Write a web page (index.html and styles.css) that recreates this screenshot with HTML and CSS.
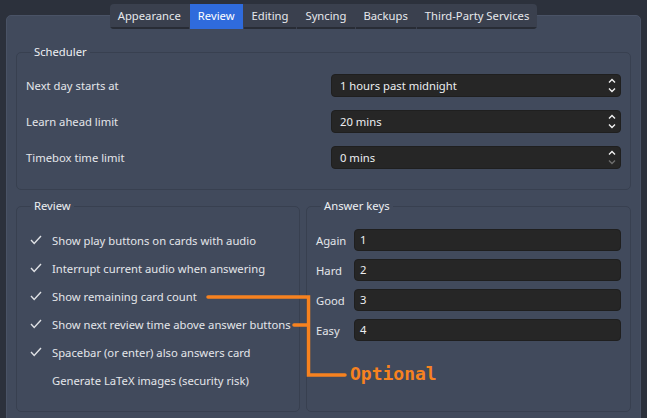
FILE: index.html
```html
<!DOCTYPE html>
<html lang="en">
<head>
<meta charset="utf-8">
<title>Preferences</title>
<link rel="stylesheet" href="styles.css">
</head>
<body>
<div class="window">
  <nav class="tabs">
    <div class="tab">Appearance</div>
    <div class="tab active">Review</div>
    <div class="tab">Editing</div>
    <div class="tab">Syncing</div>
    <div class="tab">Backups</div>
    <div class="tab">Third-Party Services</div>
  </nav>
  <main class="panel">
    <fieldset class="group scheduler">
      <legend>Scheduler</legend>
      <div class="form-grid">
        <label class="field-label">Next day starts at</label>
        <div class="spinbox"><span>1 hours past midnight</span>
          <svg class="spin" width="8" height="15" viewBox="0 0 8 15"><polyline points="1,4.5 4,1.5 7,4.5"/><polyline points="1,10.5 4,13.5 7,10.5"/></svg>
        </div>
        <label class="field-label">Learn ahead limit</label>
        <div class="spinbox"><span>20 mins</span>
          <svg class="spin" width="8" height="15" viewBox="0 0 8 15"><polyline points="1,4.5 4,1.5 7,4.5"/><polyline points="1,10.5 4,13.5 7,10.5"/></svg>
        </div>
        <label class="field-label">Timebox time limit</label>
        <div class="spinbox"><span>0 mins</span>
          <svg class="spin" width="8" height="15" viewBox="0 0 8 15"><polyline points="1,4.5 4,1.5 7,4.5"/><polyline class="disabled" points="1,10.5 4,13.5 7,10.5"/></svg>
        </div>
      </div>
    </fieldset>
    <div class="bottom-row">
      <fieldset class="group review">
        <legend>Review</legend>
        <ul class="checks">
          <li><svg class="check" width="12" height="10" viewBox="0 0 12 10"><polyline points="1,5 4.2,8.5 11,1"/></svg>Show play buttons on cards with audio</li>
          <li><svg class="check" width="12" height="10" viewBox="0 0 12 10"><polyline points="1,5 4.2,8.5 11,1"/></svg>Interrupt current audio when answering</li>
          <li><svg class="check" width="12" height="10" viewBox="0 0 12 10"><polyline points="1,5 4.2,8.5 11,1"/></svg>Show remaining card count</li>
          <li><svg class="check" width="12" height="10" viewBox="0 0 12 10"><polyline points="1,5 4.2,8.5 11,1"/></svg>Show next review time above answer buttons</li>
          <li><svg class="check" width="12" height="10" viewBox="0 0 12 10"><polyline points="1,5 4.2,8.5 11,1"/></svg>Spacebar (or enter) also answers card</li>
          <li><span class="check-empty"></span>Generate LaTeX images (security risk)</li>
        </ul>
      </fieldset>
      <fieldset class="group keys">
        <legend>Answer keys</legend>
        <div class="keys-grid">
          <label class="field-label">Again</label><div class="input">1</div>
          <label class="field-label">Hard</label><div class="input">2</div>
          <label class="field-label">Good</label><div class="input">3</div>
          <label class="field-label">Easy</label><div class="input">4</div>
        </div>
      </fieldset>
    </div>
  </main>
  <svg class="annotation" width="647" height="418" viewBox="0 0 647 418">
    <path d="M208,297 H308.5 V375 H345 M294,325 H308.5"/>
  </svg>
  <span class="optional">Optional</span>
</div>
</body>
</html>
```
FILE: styles.css
```css
html, body {
  margin: 0;
  padding: 0;
}
body {
  width: 647px;
  height: 418px;
  overflow: hidden;
  background: #2c313c;
  font-family: "Noto Sans", "Open Sans", sans-serif;
  font-size: 11.25px;
  color: #e4e6ea;
}
.window {
  position: relative;
  width: 647px;
  height: 418px;
  padding-top: 4px;
  box-sizing: border-box;
}
.tabs {
  position: relative;
  z-index: 1;
  display: flex;
  gap: 1px;
  width: max-content;
  margin: 0 auto;
  height: 25px;
  background: #3a404e;
  border-radius: 4px;
  overflow: hidden;
}
.tab {
  padding: 1px 8px 0 8px;
  line-height: 22px;
  border-bottom: 2px solid #282c35;
  color: #e6e8ec;
}
.tab.active {
  background: #2f6bdc;
  border-bottom-color: #2f6bdc;
  color: #ffffff;
}
.panel {
  margin: -14px 6px 0 6px;
  height: 420px;
  background: #414a5c;
  border: 1px solid #4a5366;
  border-radius: 5px;
  padding: 28px 9px 0 9px;
  box-sizing: border-box;
}
.group {
  margin: 0;
  border: 1px solid #384050;
  border-radius: 5px;
  min-width: 0;
}
.group legend {
  padding: 0 3px;
  margin-left: 5px;
  line-height: 16px;
  color: #eef0f3;
}
.scheduler {
  padding: 14px 9px 20px 9px;
}
.form-grid {
  display: grid;
  grid-template-columns: 1fr 290px;
  row-gap: 13px;
  align-items: center;
}
.field-label {
  color: #e4e6ea;
}
.spinbox {
  height: 23px;
  box-sizing: border-box;
  background: #262626;
  border: 1px solid #1f1f1f;
  border-radius: 4px;
  display: flex;
  align-items: center;
  justify-content: space-between;
  padding: 0 4px 0 8px;
  color: #eceef1;
}
.spin polyline {
  fill: none;
  stroke: #f2f2f2;
  stroke-width: 1.4;
}
.spin polyline.disabled {
  stroke: #6e6e6e;
}
.bottom-row {
  display: grid;
  grid-template-columns: 284px 1fr;
  column-gap: 6px;
  margin-top: 8px;
}
.review {
  padding: 12px 8px 18px 13px;
  height: 214px;
  box-sizing: border-box;
}
.review legend {
  margin-left: 1px;
}
.checks {
  list-style: none;
  margin: 0;
  padding: 0;
}
.checks li {
  display: flex;
  align-items: center;
  height: 28px;
  white-space: nowrap;
}
.check {
  margin-right: 10px;
  flex: none;
}
.check polyline {
  fill: none;
  stroke: #dfe1e5;
  stroke-width: 1.4;
}
.check-empty {
  width: 12px;
  height: 10px;
  margin-right: 10px;
}
.keys {
  padding: 15px 9px 18px 9px;
  height: 214px;
  box-sizing: border-box;
}
.keys-grid {
  display: grid;
  grid-template-columns: 38px 1fr;
  row-gap: 8px;
  align-items: center;
}
.input {
  height: 22px;
  box-sizing: border-box;
  background: #262626;
  border: 1px solid #1f1f1f;
  border-radius: 4px;
  padding: 0 5px;
  line-height: 20px;
  color: #eceef1;
}
.annotation {
  position: absolute;
  left: 0;
  top: 0;
  pointer-events: none;
}
.annotation path {
  fill: none;
  stroke: #f7821f;
  stroke-width: 3.5;
  stroke-linecap: round;
  stroke-linejoin: miter;
}
.optional {
  position: absolute;
  left: 350px;
  top: 362px;
  font-family: "DejaVu Sans Mono", monospace;
  font-weight: bold;
  font-size: 18px;
  line-height: 24px;
  color: #f7821f;
}
```
